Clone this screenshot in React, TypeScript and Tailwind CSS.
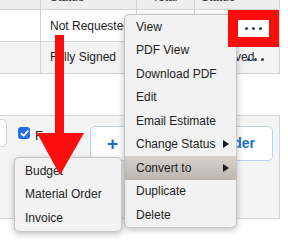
import React from "react";

const MENU: { label: string; sub?: boolean; on?: boolean }[] = [
  { label: "View" },
  { label: "PDF View" },
  { label: "Download PDF" },
  { label: "Edit" },
  { label: "Email Estimate" },
  { label: "Change Status", sub: true },
  { label: "Convert to", sub: true, on: true },
  { label: "Duplicate" },
  { label: "Delete" },
];

const CONVERT = ["Budget", "Material Order", "Invoice"];

function Dots({ className = "" }: { className?: string }) {
  return (
    <span className={`flex items-center gap-[4px] ${className}`}>
      <span className="h-[3px] w-[3px] rounded-full bg-[#2d3b4c]" />
      <span className="h-[3px] w-[3px] rounded-full bg-[#2d3b4c]" />
      <span className="h-[3px] w-[3px] rounded-full bg-[#2d3b4c]" />
    </span>
  );
}

function Caret() {
  return (
    <svg width="6" height="8" viewBox="0 0 6 8">
      <path d="M0 0 L6 4 L0 8 Z" fill="#1a1a1a" />
    </svg>
  );
}

export default function App() {
  return (
    <div className="relative h-[243px] w-[288px] overflow-hidden bg-white font-['Liberation_Sans',Arial,sans-serif] text-[12px] text-[#222]">
      {/* table */}
      <div className="-mt-[14px] flex h-[24px] w-[280px] border-b border-r border-[#d2d2d2] bg-[#eeeeee] text-[#333]">
        <div className="w-[41px] border-r border-[#d2d2d2]" />
        <div className="flex w-[96px] items-end border-r border-[#d2d2d2] pb-[3px] pl-[9px]">Status</div>
        <div className="flex w-[58px] items-end border-r border-[#d2d2d2] pb-[3px] pl-[15px]">Total</div>
        <div className="flex w-[84px] items-end pb-[3px] pl-[6px]">Status</div>
      </div>
      <div className="flex h-[32px] w-[280px] border-b border-r border-[#d2d2d2] bg-white">
        <div className="w-[41px] border-r border-[#d2d2d2]" />
        <div className="w-[96px] whitespace-nowrap border-r border-[#d2d2d2] pl-[9px] pt-[7px]">Not Requested</div>
        <div className="w-[58px] border-r border-[#d2d2d2]" />
        <div className="w-[84px]" />
      </div>
      <div className="flex h-[32px] w-[280px] border-b border-r border-[#d2d2d2] bg-[#f3f3f3]">
        <div className="w-[41px] border-r border-[#d2d2d2]" />
        <div className="w-[96px] whitespace-nowrap border-r border-[#d2d2d2] pl-[9px] pt-[6px]">Fully Signed</div>
        <div className="w-[58px] border-r border-[#d2d2d2]" />
        <div className="w-[84px] whitespace-nowrap pl-[8px] pt-[6px]">Approved</div>
      </div>

      {/* bottom toolbar */}
      <div className="mt-[41px] flex h-[104px] w-[280px] items-start border-y border-r border-[#d4d4d4] bg-[#f4f4f4]">
        <div className="-ml-[10px] mt-[3px] h-[28px] w-[17px] rounded-[5px] border border-[#cfcfcf] bg-white" />
        <span className="ml-[11px] mt-[11px] flex h-[12px] w-[12px] items-center justify-center rounded-[3px] bg-[#1f6fe8]">
          <svg width="9" height="9" viewBox="0 0 10 10">
            <path d="M1.5 5.2 L4 7.6 L8.6 2.4" stroke="white" strokeWidth="2" fill="none" strokeLinecap="round" strokeLinejoin="round" />
          </svg>
        </span>
        <span className="ml-[5px] mt-[10px] text-[13px] text-[#222]">F</span>
        <div className="ml-auto mr-[6px] mt-[10px] flex h-[35px] w-[183px] items-center justify-between rounded-[5px] border border-[#b9d3ee] bg-white pl-[16px] pr-[17px] font-bold text-[#1d6cc8]">
          <span className="text-[19px] leading-none">+</span>
          <span className="text-[14px]">Material Order</span>
        </div>
      </div>

      {/* row 2 actions */}
      <Dots className="absolute left-[247px] top-[58px]" />

      {/* context menu */}
      <div className="absolute left-[124px] top-[14px] w-[113px] rounded-[5px] border border-[#c4c4c4] bg-[#f2f2f2] shadow-[0_2px_6px_rgba(0,0,0,0.25)]">
        {MENU.map((m) => (
          <div
            key={m.label}
            className={`flex h-[23.5px] items-center justify-between whitespace-nowrap pl-[11px] pr-[7px] ${
              m.on ? "bg-gradient-to-b from-[#d6d1cd] to-[#bdb6b0]" : ""
            }`}
          >
            <span>{m.label}</span>
            {m.sub && <Caret />}
          </div>
        ))}
      </div>

      {/* convert submenu */}
      <div className="absolute left-[14px] top-[157px] w-[108px] rounded-[5px] border border-[#c4c4c4] bg-[#f2f2f2] py-px shadow-[0_2px_6px_rgba(0,0,0,0.25)]">
        {CONVERT.map((c) => (
          <div key={c} className="flex h-[23.5px] items-center whitespace-nowrap pl-[10px]">
            {c}
          </div>
        ))}
      </div>

      {/* highlighted action button */}
      <div className="absolute left-[228px] top-[10px] flex h-[37px] w-[51px] items-center justify-center border-[10px] border-[#fb0d0d] bg-white">
        <Dots />
      </div>

      {/* annotation arrow */}
      <svg className="pointer-events-none absolute left-0 top-0" width="288" height="243" viewBox="0 0 288 243">
        <rect x="55" y="35" width="9" height="100" fill="#fb0d0d" />
        <path d="M37 133 L84 133 L60 175 Z" fill="#fb0d0d" />
      </svg>
    </div>
  );
}
